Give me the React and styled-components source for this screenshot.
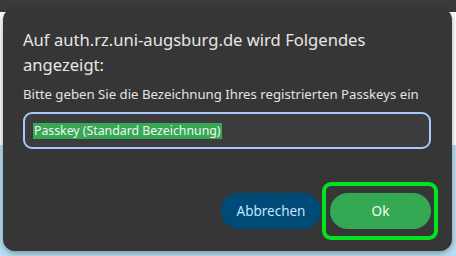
import styled, { createGlobalStyle } from 'styled-components';

const GlobalStyle = createGlobalStyle`
  html, body {
    margin: 0;
    padding: 0;
    width: 456px;
    height: 256px;
    overflow: hidden;
    font-family: 'Noto Sans', 'DejaVu Sans', sans-serif;
  }
`;

const Page = styled.div`
  position: relative;
  width: 456px;
  height: 256px;
  display: flex;
  flex-direction: column;
`;

const Chrome = styled.div`
  height: 12px;
  background: #3b3b3b;
`;

const Content = styled.div`
  height: 133px;
  background: #ffffff;
`;

const Banner = styled.div`
  flex: 1;
  background: #b9def3;
`;

const Dialog = styled.div`
  position: absolute;
  top: 8px;
  left: 3px;
  width: 449px;
  height: 243px;
  box-sizing: border-box;
  padding: 19px 21px 0 20px;
  background: #363636;
  border-radius: 12px;
  box-shadow: 0 2px 6px rgba(0, 0, 0, 0.35);
  display: flex;
  flex-direction: column;
`;

const Title = styled.h1`
  margin: 0;
  height: 50px;
  font-size: 16.6px;
  font-weight: 400;
  line-height: 25px;
  color: #e6e6e6;
  white-space: nowrap;
`;

const Message = styled.p`
  margin: 8px 0 0;
  font-size: 13.2px;
  line-height: 18px;
  color: #e3e3e3;
  white-space: nowrap;
`;

const Field = styled.div`
  margin-top: 9px;
  height: 37px;
  box-sizing: border-box;
  border: 2px solid #a8c7fa;
  border-radius: 9px;
  background: #3c3c3c;
  display: flex;
  align-items: center;
  padding: 0 8px;
`;

const Selected = styled.span`
  background: #35a853;
  color: #f4f4f4;
  font-size: 12.3px;
  line-height: 16px;
  padding: 0 1px;
`;

const Actions = styled.div`
  margin-top: 33px;
  display: flex;
  justify-content: flex-end;
  align-items: center;
  gap: 1px;
`;

const Button = styled.button`
  height: 36px;
  width: ${p => p.$w}px;
  border: none;
  border-radius: 18px;
  font-family: inherit;
  font-size: 13.5px;
  background: ${p => (p.$primary ? '#35a853' : '#004a77')};
  color: ${p => (p.$primary ? '#f4fff6' : '#c2e7ff')};
`;

const FocusRing = styled.div`
  display: flex;
  padding: 7px 3px 7px 4px;
  border: 4px solid #00e51d;
  border-radius: 9px;
  margin-right: -7px;
`;

export default function App() {
  return (
    <>
      <GlobalStyle />
      <Page>
        <Chrome />
        <Content />
        <Banner />
        <Dialog>
          <Title>
            Auf auth.rz.uni-augsburg.de wird Folgendes
            <br />
            angezeigt:
          </Title>
          <Message>Bitte geben Sie die Bezeichnung Ihres registrierten Passkeys ein</Message>
          <Field>
            <Selected>Passkey (Standard Bezeichnung)</Selected>
          </Field>
          <Actions>
            <Button $w={100}>Abbrechen</Button>
            <FocusRing>
              <Button $primary $w={101}>Ok</Button>
            </FocusRing>
          </Actions>
        </Dialog>
      </Page>
    </>
  );
}
